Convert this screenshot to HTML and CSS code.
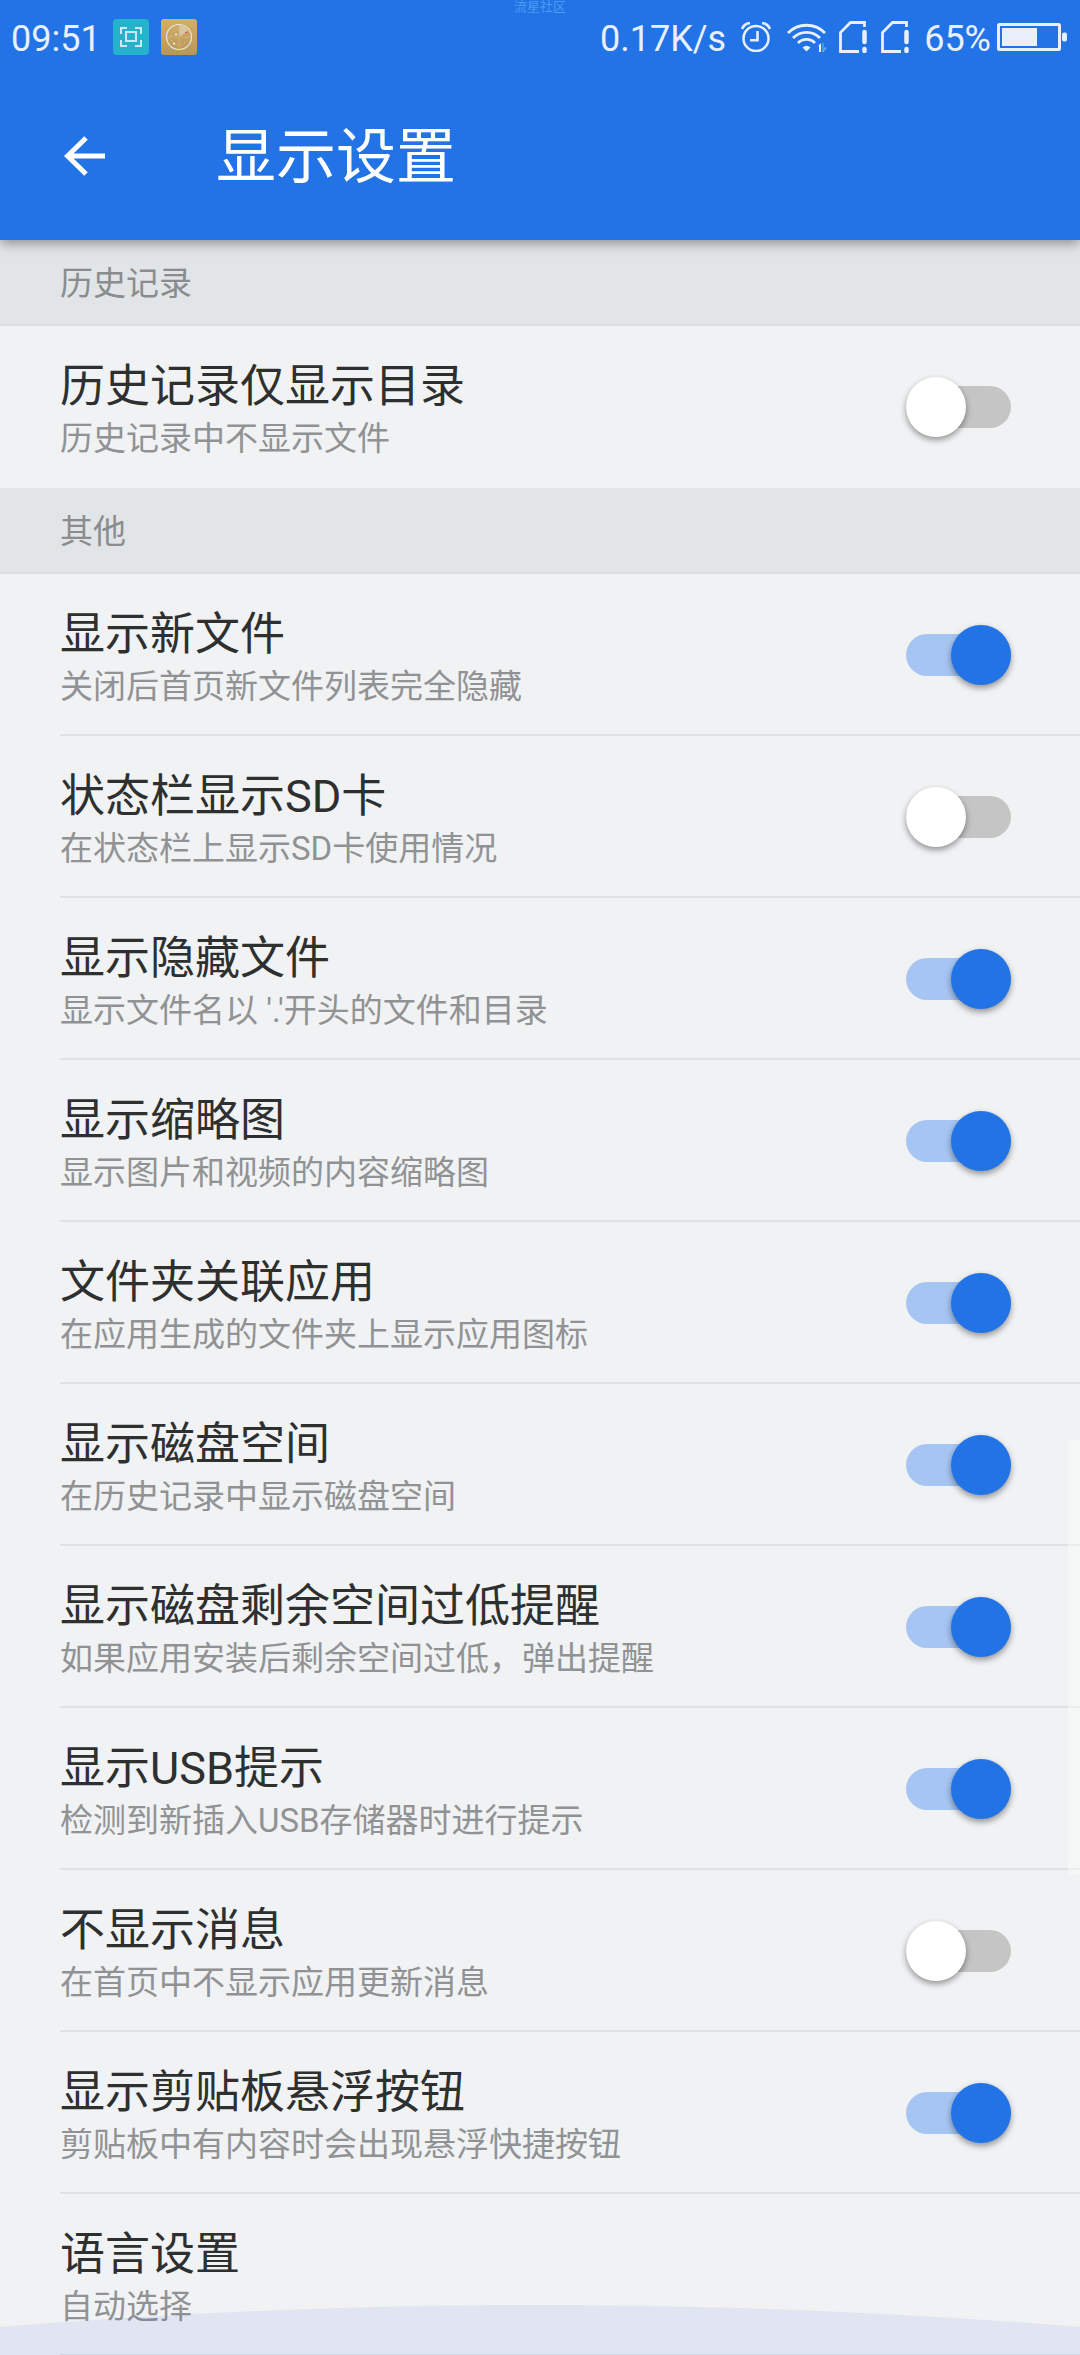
FILE: index.html
```html
<!DOCTYPE html>
<html lang="zh-CN">
<head>
    <meta charset="UTF-8">
    <meta name="viewport" content="width=device-width, initial-scale=1.0">
    <title>显示设置</title>
    <link rel="stylesheet" href="styles.css">
</head>
<body>
    <div class="screen">
        <header class="app-header">
            <div class="status-bar">
                <div class="status-left">
                    <span class="clock">09:51</span>
                    <svg class="app-icon" viewBox="0 0 36 36" aria-hidden="true">
                        <rect width="36" height="36" rx="4" fill="#24b3cb"/>
                        <g fill="none" stroke="#c9e9fb" stroke-width="2">
                            <path d="M8 15V9h6M22 9h6v6M28 21v6h-6M14 27H8v-6"/>
                            <rect x="13" y="13" width="10" height="9"/>
                        </g>
                    </svg>
                    <svg class="app-icon" viewBox="0 0 36 36" aria-hidden="true">
                        <defs>
                            <linearGradient id="gold" x1="0" y1="0" x2="0" y2="1">
                                <stop offset="0" stop-color="#d2b067"/>
                                <stop offset="1" stop-color="#b99656"/>
                            </linearGradient>
                        </defs>
                        <rect width="36" height="36" rx="3" fill="url(#gold)"/>
                        <path d="M18 18V6a12 12 0 0 1 9 6z" fill="#e0d5bd" opacity=".7"/>
                        <path d="M18 5v26M5 18h26" stroke="#cdb07a" stroke-width="1"/>
                        <circle cx="18" cy="18" r="8" fill="none" stroke="#d6be8e" stroke-width="1" stroke-dasharray="2 3"/>
                        <circle cx="18" cy="18" r="12.5" fill="none" stroke="#e6e6e4" stroke-width="1.2"/>
                        <path d="M14 15.500h2M12 24.500h2" stroke="#f2f5fa" stroke-width="1.500"/>
                        <path d="M24 13.500h2.500" stroke="#d65a6a" stroke-width="1.500"/>
                    </svg>
                </div>
                <div class="status-right">
                    <span class="speed">0.17K/s</span>
                    <svg class="alarm" viewBox="0 0 30 30" fill="none" stroke="currentColor" aria-hidden="true">
                        <circle cx="15" cy="16.500" r="12.500" stroke-width="2.500"/>
                        <path d="M16.500 9v9.300H9" stroke-width="2.600"/>
                        <path d="M1 7a10 10 0 0 1 8-6M29 7a10 10 0 0 0-8-6" stroke-width="2.600"/>
                    </svg>
                    <svg class="wifi" viewBox="0 0 40 30" fill="none" stroke="currentColor" aria-hidden="true">
                        <path d="M1 11a26 26 0 0 1 37 0M6 16a19 19 0 0 1 27 0M11 21a12 12 0 0 1 17 0" stroke-width="2.800"/>
                        <path d="M15.500 25.500q4-3.500 8 0l-4 4z" fill="currentColor" stroke="none"/>
                        <path d="M31 24l3-3v9h-2v-6z" fill="currentColor" stroke="none"/>
                        <path d="M36 21v9l3-4h-2" stroke-width="1" opacity=".5"/>
                    </svg>
                    <svg class="sim" viewBox="0 0 28 32" fill="none" stroke="currentColor" stroke-width="2.800" aria-hidden="true">
                        <path d="M25.500 6V1.500H11.500L1.500 11.500V30.500H20"/>
                        <path d="M25.500 11v10M25.500 28v2" stroke-width="4.500" stroke-linecap="round"/>
                    </svg>
                    <svg class="sim" viewBox="0 0 28 32" fill="none" stroke="currentColor" stroke-width="2.800" aria-hidden="true">
                        <path d="M25.500 6V1.500H11.500L1.500 11.500V30.500H20"/>
                        <path d="M25.500 11v10M25.500 28v2" stroke-width="4.500" stroke-linecap="round"/>
                    </svg>
                    <span class="percent">65%</span>
                    <svg class="battery" viewBox="0 0 70 28" aria-hidden="true">
                        <rect x="1.500" y="1.500" width="61" height="25" rx="1" fill="none" stroke="currentColor" stroke-width="3"/>
                        <rect x="5" y="5" width="35" height="18" fill="currentColor"/>
                        <rect x="65" y="9.500" width="5" height="9" rx="2" fill="currentColor"/>
                    </svg>
                </div>
            </div>
            <div class="toolbar">
                <button class="back" aria-label="返回">
                    <svg viewBox="0 0 42 40" fill="none" stroke="currentColor" stroke-width="5" aria-hidden="true">
                        <path d="M22 2L3.500 20 22 38M4 20h37"/>
                    </svg>
                </button>
                <h1>显示设置</h1>
            </div>
        </header>

        <main class="settings">
            <h2 class="section">历史记录</h2>
            <label class="row last">
                <span class="text">
                    <span class="title">历史记录仅显示目录</span>
                    <span class="desc">历史记录中不显示文件</span>
                </span>
                <input type="checkbox" class="switch">
            </label>

            <h2 class="section">其他</h2>
            <label class="row">
                <span class="text">
                    <span class="title">显示新文件</span>
                    <span class="desc">关闭后首页新文件列表完全隐藏</span>
                </span>
                <input type="checkbox" class="switch" checked>
            </label>
            <label class="row">
                <span class="text">
                    <span class="title">状态栏显示SD卡</span>
                    <span class="desc">在状态栏上显示SD卡使用情况</span>
                </span>
                <input type="checkbox" class="switch">
            </label>
            <label class="row">
                <span class="text">
                    <span class="title">显示隐藏文件</span>
                    <span class="desc">显示文件名以 '.'开头的文件和目录</span>
                </span>
                <input type="checkbox" class="switch" checked>
            </label>
            <label class="row">
                <span class="text">
                    <span class="title">显示缩略图</span>
                    <span class="desc">显示图片和视频的内容缩略图</span>
                </span>
                <input type="checkbox" class="switch" checked>
            </label>
            <label class="row">
                <span class="text">
                    <span class="title">文件夹关联应用</span>
                    <span class="desc">在应用生成的文件夹上显示应用图标</span>
                </span>
                <input type="checkbox" class="switch" checked>
            </label>
            <label class="row">
                <span class="text">
                    <span class="title">显示磁盘空间</span>
                    <span class="desc">在历史记录中显示磁盘空间</span>
                </span>
                <input type="checkbox" class="switch" checked>
            </label>
            <label class="row">
                <span class="text">
                    <span class="title">显示磁盘剩余空间过低提醒</span>
                    <span class="desc">如果应用安装后剩余空间过低，弹出提醒</span>
                </span>
                <input type="checkbox" class="switch" checked>
            </label>
            <label class="row">
                <span class="text">
                    <span class="title">显示USB提示</span>
                    <span class="desc">检测到新插入USB存储器时进行提示</span>
                </span>
                <input type="checkbox" class="switch" checked>
            </label>
            <label class="row">
                <span class="text">
                    <span class="title">不显示消息</span>
                    <span class="desc">在首页中不显示应用更新消息</span>
                </span>
                <input type="checkbox" class="switch">
            </label>
            <label class="row">
                <span class="text">
                    <span class="title">显示剪贴板悬浮按钮</span>
                    <span class="desc">剪贴板中有内容时会出现悬浮快捷按钮</span>
                </span>
                <input type="checkbox" class="switch" checked>
            </label>
            <a class="row" href="#language">
                <span class="text">
                    <span class="title">语言设置</span>
                    <span class="desc">自动选择</span>
                </span>
            </a>
        </main>

        <div class="watermark">流星社区</div>
        <div class="edge-handle"></div>
        <svg class="bottom-glow" viewBox="0 0 1080 50" preserveAspectRatio="none" aria-hidden="true">
            <path d="M0 22Q540-22 1080 22V50H0z"/>
        </svg>
    </div>
</body>
</html>
```
FILE: styles.css
```css
:root {
    --blue: #2273e6;
    --page-bg: #f0f2f4;
    --section-bg: #e1e5e8;
    --line: #dfe1e3;
    --status: #e9f0fc;
}

* {
    box-sizing: border-box;
}

body {
    margin: 0;
    font-family: Roboto, "Noto Sans CJK SC", sans-serif;
    background: var(--page-bg);
}

.screen {
    position: relative;
    display: flex;
    flex-direction: column;
    height: 100vh;
    overflow: hidden;
}

/* header */
.app-header {
    flex: none;
    z-index: 1;
    background: var(--blue);
    color: white;
    box-shadow: 0 3px 12px rgba(0, 0, 0, 0.4);
}

.status-bar {
    display: flex;
    justify-content: space-between;
    align-items: center;
    height: 72px;
    padding: 2px 13px 0 11px;
    color: var(--status);
    font-size: 36px;
}

.status-left, .status-right {
    display: flex;
    align-items: center;
}

.status-left {
    gap: 12px;
}

.status-bar span {
    padding-top: 4px;
}

.status-bar svg {
    flex: none;
    display: block;
}

.app-icon {
    width: 36px;
    height: 36px;
}

.alarm {
    width: 30px;
    height: 30px;
    margin-left: 15px;
}

.wifi {
    width: 40px;
    height: 30px;
    margin-left: 16px;
}

.sim {
    width: 28px;
    height: 32px;
    margin-left: 12px;
}

.sim + .sim {
    margin-left: 14px;
}

.percent {
    margin-left: 15px;
}

.battery {
    width: 70px;
    height: 28px;
    margin-left: 6px;
}

.toolbar {
    display: flex;
    align-items: center;
    gap: 110px;
    height: 168px;
    padding: 0 60px 0 64px;
}

.back {
    padding: 0;
    border: none;
    background: none;
    color: white;
    cursor: pointer;
}

.back svg {
    display: block;
    width: 42px;
    height: 40px;
}

h1 {
    margin: 0;
    padding-top: 4px;
    font-size: 60px;
    font-weight: 400;
    line-height: 72px;
}

/* list */
.settings {
    flex: 1;
    min-height: 0;
    overflow-y: auto;
    scrollbar-width: none;
}

.section {
    margin: 0;
    padding: 24px 60px 20px;
    border-bottom: 2px solid #dadee1;
    background: var(--section-bg);
    color: #8b8c8d;
    font-size: 33px;
    font-weight: 400;
    line-height: 40px;
}

.row {
    display: flex;
    justify-content: space-between;
    align-items: center;
    min-height: 162px;
    margin-left: 60px;
    padding: 2px 69px 0 0;
    border-bottom: 2px solid var(--line);
    color: #2e2f2f;
    text-decoration: none;
    cursor: pointer;
}

.row.last {
    border-bottom-color: transparent;
}

.text {
    display: flex;
    flex-direction: column;
    gap: 5px;
    padding-top: 5px;
}

.title {
    font-size: 45px;
    line-height: 54px;
}

.desc {
    color: #919294;
    font-size: 33px;
    line-height: 40px;
}

.switch {
    appearance: none;
    flex: none;
    width: 105px;
    height: 42px;
    margin: 0;
    border-radius: 21px;
    background: #c5c5c5;
    cursor: pointer;
}

.switch::before {
    content: "";
    display: block;
    width: 60px;
    height: 60px;
    margin-top: -9px;
    border-radius: 50%;
    background: white;
    box-shadow: 0 3px 6px rgba(0, 0, 0, 0.4);
}

.switch:checked {
    background: #a6c5f2;
}

.switch:checked::before {
    margin-left: 45px;
    background: var(--blue);
}

/* system overlays */
.watermark {
    position: absolute;
    top: 0;
    left: 0;
    right: 0;
    z-index: 2;
    color: #4a9bf3;
    font-size: 13px;
    font-weight: 400;
    line-height: 13px;
    text-align: center;
    pointer-events: none;
}

.edge-handle {
    position: absolute;
    top: 1440px;
    right: 0;
    width: 12px;
    height: 435px;
    background: rgba(250, 252, 248, 0.5);
}

.bottom-glow {
    position: absolute;
    left: 0;
    bottom: 0;
    width: 100%;
    height: 50px;
    fill: rgba(34, 80, 220, 0.08);
    pointer-events: none;
}
```
